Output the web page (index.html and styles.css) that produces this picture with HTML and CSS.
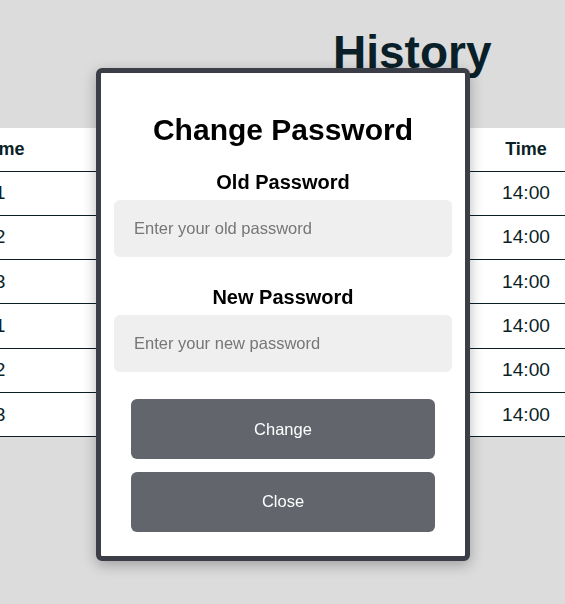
FILE: index.html
```html
<!DOCTYPE html>
<html lang="en">
<head>
<meta charset="utf-8">
<title>History</title>
<link rel="stylesheet" href="styles.css">
</head>
<body>
<main class="page">
  <h1 class="page-title">History</h1>
  <table class="history">
    <thead>
      <tr><th class="c-name">Name</th><th class="c-date"></th><th class="c-time">Time</th></tr>
    </thead>
    <tbody>
      <tr><td>1</td><td></td><td>14:00</td></tr>
      <tr><td>2</td><td></td><td>14:00</td></tr>
      <tr><td>3</td><td></td><td>14:00</td></tr>
      <tr><td>1</td><td></td><td>14:00</td></tr>
      <tr><td>2</td><td></td><td>14:00</td></tr>
      <tr><td>3</td><td></td><td>14:00</td></tr>
    </tbody>
  </table>
</main>

<div class="modal" role="dialog" aria-labelledby="modal-title">
  <h2 class="modal-title" id="modal-title">Change Password</h2>
  <label class="field-label label-first" for="old-pw">Old Password</label>
  <input class="field-input" id="old-pw" type="password" placeholder="Enter your old password">
  <label class="field-label label-next" for="new-pw">New Password</label>
  <input class="field-input" id="new-pw" type="password" placeholder="Enter your new password">
  <button class="btn btn-first" type="button">Change</button>
  <button class="btn btn-next" type="button">Close</button>
</div>
</body>
</html>
```

FILE: styles.css
```css
* { box-sizing: border-box; }

html, body {
  margin: 0;
  padding: 0;
}

body {
  background: #dcdcdc;
  font-family: "Liberation Sans", Arial, sans-serif;
  color: #0b1f27;
  overflow: hidden;
  width: 565px;
  height: 604px;
}

.page {
  padding-top: 25px;
}

.page-title {
  margin: 0 0 49px 0;
  padding-left: 333px;
  font-size: 46px;
  font-weight: 700;
  line-height: normal;
  color: #0a1f28;
}

.history {
  margin-left: -60px;
  width: 660px;
  border-collapse: collapse;
  background: #ffffff;
  table-layout: fixed;
}

.history th,
.history td {
  text-align: center;
  padding: 0;
  border-bottom: 1px solid #0b1f27;
}

.history th {
  height: 43px;
  font-size: 18px;
  font-weight: 700;
}

.history td {
  height: 44.3px;
  font-size: 19.2px;
}

.c-name { width: 120px; }
.c-date { width: 392px; }
.c-time { width: 148px; }

.modal {
  position: fixed;
  left: 96px;
  top: 68px;
  width: 374px;
  height: 493px;
  background: #ffffff;
  border: 5px solid #3b3e46;
  border-radius: 6px;
  box-shadow: 0 4px 14px rgba(0, 0, 0, 0.28);
  display: flex;
  flex-direction: column;
  align-items: center;
  padding-top: 39.5px;
  color: #000000;
}

.modal-title {
  margin: 0;
  font-size: 30px;
  font-weight: 700;
  line-height: normal;
}

.field-label {
  font-size: 20px;
  font-weight: 700;
  line-height: normal;
}

.label-first { margin-top: 24px; }
.label-next { margin-top: 29px; }

.field-input {
  margin-top: 6px;
  width: 338px;
  height: 57px;
  border: none;
  border-radius: 6px;
  background: #efefef;
  padding: 0 20px;
  font-family: "Liberation Sans", Arial, sans-serif;
  font-size: 16.5px;
  color: #333333;
  outline: none;
}

.field-input::placeholder {
  color: #767676;
}

.btn {
  width: 304px;
  height: 60px;
  border: none;
  border-radius: 6px;
  background: #62656c;
  color: #ffffff;
  font-family: "Liberation Sans", Arial, sans-serif;
  font-size: 16.5px;
  cursor: pointer;
}

.btn-first { margin-top: 27.5px; }
.btn-next { margin-top: 12.7px; }
```
